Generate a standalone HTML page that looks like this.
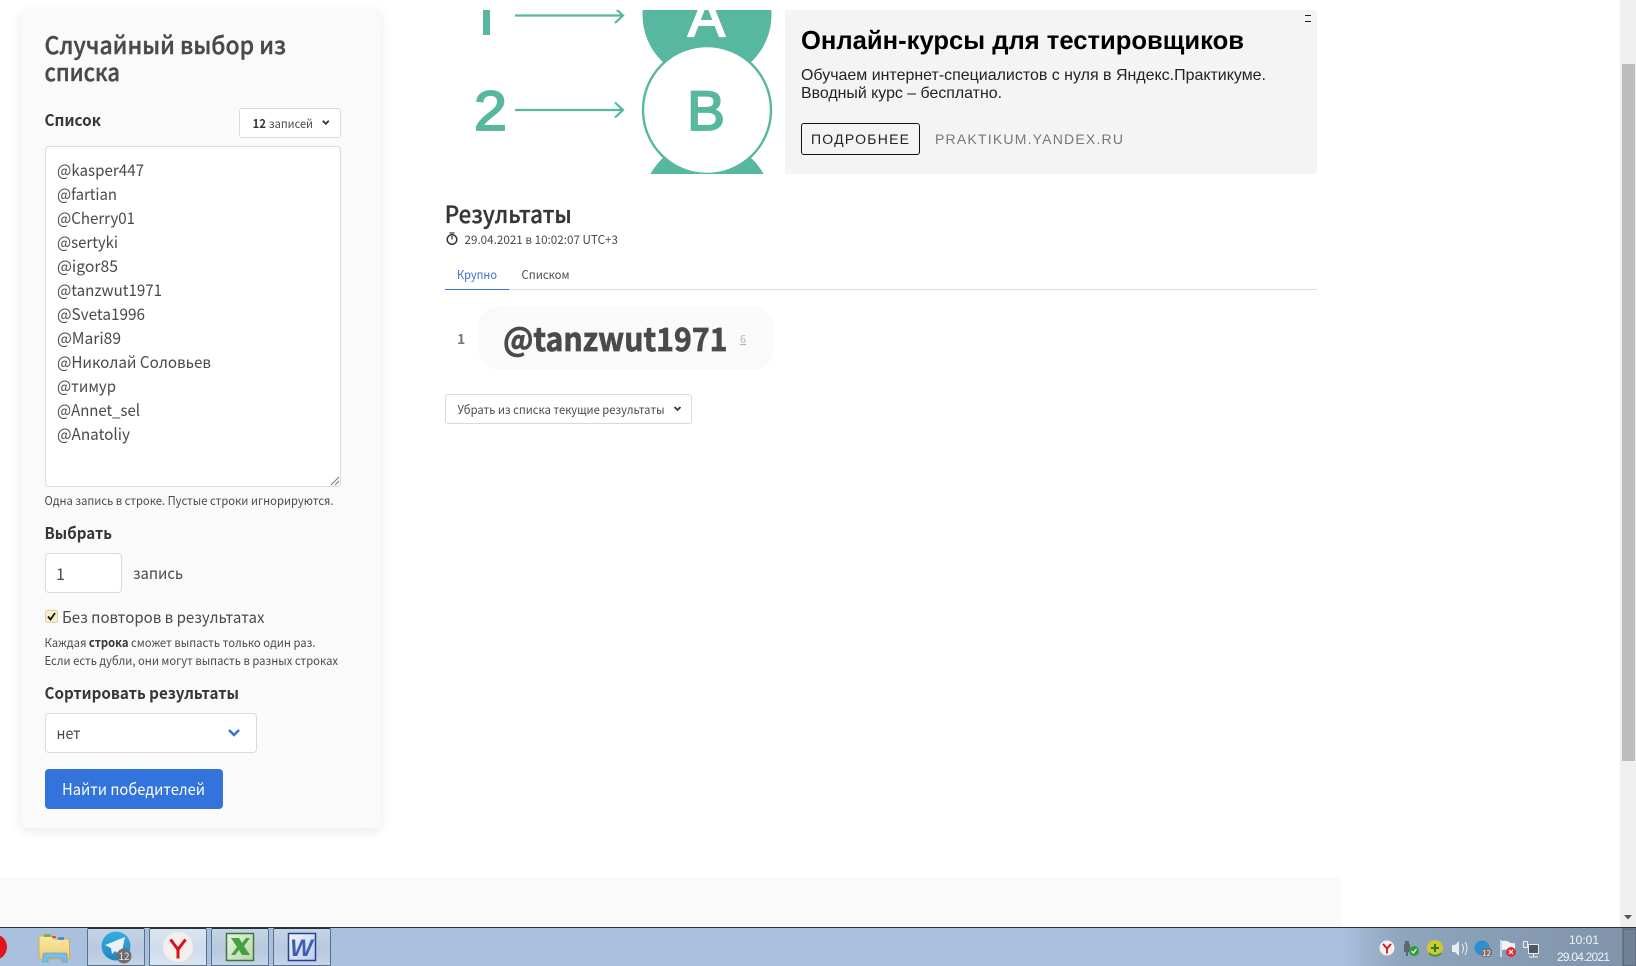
<!DOCTYPE html>
<html lang="ru"><head><meta charset="utf-8"><title>Случайный выбор из списка</title>
<style>
html,body{margin:0;padding:0;width:1636px;height:966px;overflow:hidden;background:#fff}
.b{position:absolute;box-sizing:border-box}
svg{position:absolute;left:0;top:0}
text{font-family:"Noto Sans CJK SC","Liberation Sans",sans-serif;fill:#4a4a4a}
.a{font-family:"Liberation Sans",Arial,sans-serif}
.bd{font-weight:700;fill:#363636}
.tb{position:absolute;top:928px;width:58px;height:38px;box-sizing:border-box;border:1px solid #5d7189;border-top-color:#27323f;border-radius:2px 2px 0 0;background:linear-gradient(180deg,#c6d4e6 0,#b7c9e0 55%,#c4d4e8 100%)}
</style></head><body>
<div class="b" style="left:21px;top:10px;width:360px;height:818px;background:#fafafa;border-radius:6px;box-shadow:0 3px 12px rgba(10,10,10,.09)"></div>
<div class="b" style="left:239px;top:108px;width:102px;height:30px;background:#fff;border:1px solid #dbdbdb;border-radius:3px"></div>
<div class="b" style="left:45px;top:146px;width:296px;height:341px;background:#fff;border:1px solid #dbdbdb;border-radius:4px"></div>
<div class="b" style="left:45px;top:553px;width:77px;height:40px;background:#fff;border:1px solid #dbdbdb;border-radius:4px"></div>
<div class="b" style="left:45px;top:713px;width:212px;height:40px;background:#fff;border:1px solid #dbdbdb;border-radius:4px"></div>
<div class="b" style="left:45px;top:769px;width:178px;height:40px;background:#3273dc;border-radius:4px"></div>
<div class="b" style="left:445px;top:394px;width:247px;height:30px;background:#fff;border:1px solid #dbdbdb;border-radius:3px"></div>
<div class="b" style="left:478px;top:306px;width:296px;height:64px;background:#fafafa;border-radius:22px"></div>
<div class="b" style="left:785px;top:10px;width:532px;height:164px;background:#f4f4f4"></div>
<div class="b" style="left:801px;top:123px;width:119px;height:32px;border:1px solid #111;border-radius:3px"></div>
<div class="b" style="left:445px;top:289px;width:872px;height:1px;background:#dbdbdb"></div>
<div class="b" style="left:445px;top:289px;width:64px;height:1px;background:#3273dc"></div>
<div class="b" style="left:0;top:877px;width:1341px;height:50px;background:#fafafa"></div>
<div class="b" style="left:1620px;top:0;width:16px;height:927px;background:#f0f0f0"></div>
<div class="b" style="left:1622px;top:64px;width:13px;height:697px;background:#bdbdbd"></div>
<div class="b" style="left:0;top:927px;width:1636px;height:39px;background:linear-gradient(90deg,#a9c1de 0,#a9c1de 1340px,#8ea5bd 1400px,#7f93a9 1636px);border-top:1px solid #27323f"></div>
<div class="tb" style="left:87px"></div>
<div class="tb" style="left:149px;background:linear-gradient(180deg,#dbe5f1 0,#cfdcec 55%,#d9e4f1 100%)"></div>
<div class="tb" style="left:211px"></div>
<div class="tb" style="left:273px"></div>
<svg width="1636" height="966" viewBox="0 0 1636 966" xmlns="http://www.w3.org/2000/svg">
<defs>
<clipPath id="ad"><rect x="445" y="10" width="340" height="164"/></clipPath>
<linearGradient id="xl" x1="0" y1="0" x2="1" y2="1"><stop offset="0" stop-color="#e6f2e0"/><stop offset="1" stop-color="#b7d8ad"/></linearGradient>
<linearGradient id="wd" x1="0" y1="0" x2="1" y2="1"><stop offset="0" stop-color="#f4f7fc"/><stop offset="1" stop-color="#bccdea"/></linearGradient>
<linearGradient id="fd" x1="0" y1="0" x2="0" y2="1"><stop offset="0" stop-color="#fbeaa8"/><stop offset="1" stop-color="#eccb72"/></linearGradient>
<linearGradient id="tg" x1="0" y1="0" x2="0" y2="1"><stop offset="0" stop-color="#37aee2"/><stop offset="1" stop-color="#1e85c2"/></linearGradient>
</defs>
<g clip-path="url(#ad)">
<circle cx="707" cy="15" r="64.500" fill="#57b79f"/>
<circle cx="707" cy="205" r="64.500" fill="#57b79f"/>
<circle cx="707" cy="110" r="64" fill="#fff" stroke="#57b79f" stroke-width="2.400"/>
<rect x="483" y="5" width="7" height="30" fill="#57b79f"/>
<path d="M515 15.500H622M615 8l8 7.500-8 7.500M515 110H622M615 102.500l8 7.500-8 7.500" fill="none" stroke="#57b79f" stroke-width="2.200"/>
<text x="474" y="130" class="a" font-size="56" textLength="33" lengthAdjust="spacingAndGlyphs" style="fill:#57b79f;stroke:#57b79f;stroke-width:1.800">2</text>
<text x="688" y="36" class="a" font-size="56" textLength="37" lengthAdjust="spacingAndGlyphs" style="fill:#fff;stroke:#fff;stroke-width:1.800">A</text>
<text x="687" y="130" class="a" font-size="56" textLength="38" lengthAdjust="spacingAndGlyphs" style="fill:#57b79f;stroke:#57b79f;stroke-width:1.800">B</text>
</g>
<g style="stroke:#4a4a4a;stroke-width:.4">
<text x="44.500" y="54" font-size="24" font-weight="500" textLength="241.500" lengthAdjust="spacingAndGlyphs">Случайный выбор из</text>
<text x="44.500" y="81" font-size="24" font-weight="500" textLength="75.500" lengthAdjust="spacingAndGlyphs">списка</text>
</g>
<text x="44.500" y="126" class="bd" font-size="16" textLength="56.500" lengthAdjust="spacingAndGlyphs">Список</text>
<text x="252.500" y="128" font-size="12" font-weight="700" textLength="13.500" lengthAdjust="spacingAndGlyphs" style="fill:#363636">12</text>
<text x="269" y="128" font-size="12" textLength="44" lengthAdjust="spacingAndGlyphs">записей</text>
<path d="M322.800 120.800l3 3 3-3" fill="none" stroke="#363636" stroke-width="1.800"/>
<g font-size="16">
<text x="57" y="176" textLength="87" lengthAdjust="spacingAndGlyphs">@kasper447</text>
<text x="57" y="200" textLength="60" lengthAdjust="spacingAndGlyphs">@fartian</text>
<text x="57" y="224" textLength="78" lengthAdjust="spacingAndGlyphs">@Cherry01</text>
<text x="57" y="248" textLength="61" lengthAdjust="spacingAndGlyphs">@sertyki</text>
<text x="57" y="272" textLength="61" lengthAdjust="spacingAndGlyphs">@igor85</text>
<text x="57" y="296" textLength="105" lengthAdjust="spacingAndGlyphs">@tanzwut1971</text>
<text x="57" y="320" textLength="88" lengthAdjust="spacingAndGlyphs">@Sveta1996</text>
<text x="57" y="344" textLength="64" lengthAdjust="spacingAndGlyphs">@Mari89</text>
<text x="57" y="368" textLength="154" lengthAdjust="spacingAndGlyphs">@Николай Соловьев</text>
<text x="57" y="392" textLength="59" lengthAdjust="spacingAndGlyphs">@тимур</text>
<text x="57" y="416" textLength="83" lengthAdjust="spacingAndGlyphs">@Annet_sel</text>
<text x="57" y="440" textLength="73" lengthAdjust="spacingAndGlyphs">@Anatoliy</text>
</g>
<path d="M331 485l8-8M335 485l4-4" stroke="#777" stroke-width="1"/>
<text x="44.500" y="505" font-size="12" textLength="289" lengthAdjust="spacingAndGlyphs">Одна запись в строке. Пустые строки игнорируются.</text>
<text x="44.500" y="539" class="bd" font-size="16" textLength="67.500" lengthAdjust="spacingAndGlyphs">Выбрать</text>
<text x="56" y="580" font-size="16">1</text>
<text x="133" y="579" font-size="16" textLength="50" lengthAdjust="spacingAndGlyphs">запись</text>
<rect x="45.500" y="610.500" width="12" height="12" rx="2" fill="#fbeec8" stroke="#d9cfae"/>
<path d="M48 616.500l2.500 3 4.500-6.500" fill="none" stroke="#111" stroke-width="1.800"/>
<text x="62" y="623" font-size="16" textLength="202.500" lengthAdjust="spacingAndGlyphs">Без повторов в результатах</text>
<text x="44.500" y="647" font-size="12" textLength="271" lengthAdjust="spacingAndGlyphs">Каждая <tspan font-weight="700" style="fill:#363636">строка</tspan> сможет выпасть только один раз.</text>
<text x="44.500" y="665" font-size="12" textLength="293.500" lengthAdjust="spacingAndGlyphs">Если есть дубли, они могут выпасть в разных строках</text>
<text x="44.500" y="699" class="bd" font-size="16" textLength="194.500" lengthAdjust="spacingAndGlyphs">Сортировать результаты</text>
<text x="56.500" y="739" font-size="16" textLength="24" lengthAdjust="spacingAndGlyphs">нет</text>
<path d="M229 730l5 5 5-5" fill="none" stroke="#3273dc" stroke-width="2.400"/>
<text x="62" y="795" font-size="16" textLength="143" lengthAdjust="spacingAndGlyphs" style="fill:#fff">Найти победителей</text>

<text x="801" y="49" class="a" font-size="26" font-weight="700" textLength="443" lengthAdjust="spacingAndGlyphs" style="fill:#000">Онлайн-курсы для тестировщиков</text>
<text x="801" y="80" class="a" font-size="16" textLength="465" lengthAdjust="spacingAndGlyphs" style="fill:#222">Обучаем интернет-специалистов с нуля в Яндекс.Практикуме.</text>
<text x="801" y="98" class="a" font-size="16" textLength="201" lengthAdjust="spacingAndGlyphs" style="fill:#222">Вводный курс – бесплатно.</text>
<text x="811" y="144" class="a" font-size="14" textLength="98" style="fill:#222">ПОДРОБНЕЕ</text>
<text x="935" y="144" class="a" font-size="14" textLength="188" style="fill:#777">PRAKTIKUM.YANDEX.RU</text>
<path d="M1305 15.500h6M1305 21.500h6" stroke="#222" stroke-width="1"/>

<text x="444.800" y="223" font-size="24" font-weight="500" textLength="127" lengthAdjust="spacingAndGlyphs" style="fill:#363636;stroke:#363636;stroke-width:.3">Результаты</text>
<circle cx="452" cy="239.500" r="4.800" fill="none" stroke="#363636" stroke-width="1.500"/>
<path d="M452 239.500v-3.500M449.500 233h5" stroke="#363636" stroke-width="1.300"/>
<text x="464.500" y="244" font-size="12" textLength="153.500" lengthAdjust="spacingAndGlyphs">29.04.2021 в 10:02:07 UTC+3</text>
<text x="457" y="279" font-size="12" textLength="40" lengthAdjust="spacingAndGlyphs" style="fill:#3d6fc4">Крупно</text>
<text x="521.500" y="279" font-size="12" textLength="48" lengthAdjust="spacingAndGlyphs">Списком</text>
<text x="457" y="344" font-size="14" font-weight="700" style="fill:#7a7a7a">1</text>
<text x="503" y="351" font-size="32" font-weight="700" textLength="224.500" lengthAdjust="spacingAndGlyphs" style="stroke:#4a4a4a;stroke-width:.7">@tanzwut1971</text>
<text x="740" y="343" font-size="11" text-decoration="underline" style="fill:#b5b5b5">6</text>
<text x="457.500" y="414" font-size="12" textLength="207" lengthAdjust="spacingAndGlyphs">Убрать из списка текущие результаты</text>
<path d="M674.500 407l3 3 3-3" fill="none" stroke="#363636" stroke-width="1.800"/>

<path d="M1624 915h8l-4 4.500z" fill="#555"/>

<!-- taskbar -->
<circle cx="-6" cy="947" r="13" fill="#e2131c"/>
<path d="M39 936h13l2 3h15l1 20H39z" fill="url(#fd)" stroke="#cfae5c"/>
<rect x="44" y="934" width="7" height="3" fill="#7fb04a"/><rect x="58" y="937" width="6" height="3" fill="#5a8fc0"/><rect x="52" y="936" width="4" height="2" fill="#d9534f"/>
<path d="M43 962v-7q0-2 2-2h20q2 0 2 2v7h-5v-4H48v4z" fill="#79bde6" stroke="#4e94c6" stroke-width=".6"/>
<circle cx="116" cy="946" r="14.500" fill="url(#tg)"/>
<path d="M105 945l20-8-4 19-6-5-3 3-1-6z" fill="#e8f2f8"/>
<circle cx="124" cy="956" r="7.500" fill="#6e6e6e"/>
<text x="124" y="960" text-anchor="middle" font-size="10" style="fill:#e6e6e6">12</text>
<circle cx="178" cy="947" r="15" fill="#f4efec"/>
<path d="M170.500 939.500l7.500 10 7.500-10M178 949.500v9" fill="none" stroke="#d8101c" stroke-width="3"/>
<rect x="226.500" y="933.500" width="27" height="27" fill="url(#xl)" stroke="#3a7a34" stroke-width="1.500"/>
<path d="M231 938h8l3 5 4-5h4l-6 8 6 9h-8l-3-5-4 5h-4l6-8z" fill="#46a03c"/>
<rect x="288.500" y="933.500" width="27" height="27" fill="url(#wd)" stroke="#23409a" stroke-width="1.500"/>
<text x="301.500" y="956" text-anchor="middle" class="a" font-size="24" font-weight="700" font-style="italic" style="fill:#3c5fb5">W</text>

<!-- tray -->
<circle cx="1387" cy="948" r="7.500" fill="#f5f1ee"/>
<path d="M1383 944l4 4.500 4-4.500M1387 948.500v5" fill="none" stroke="#d8101c" stroke-width="1.800"/>
<path d="M1405 941h4v3h1v8h-2v4h-2v-4h-2v-8h1z" fill="#5f666c"/><circle cx="1414" cy="951" r="5" fill="#2f9e3a"/>
<path d="M1411.500 951l2 2 3-4" fill="none" stroke="#fff" stroke-width="1.200"/>
<circle cx="1435" cy="948" r="8" fill="#cfc92e"/><path d="M1429 953a8 8 0 0 0 12 0" fill="none" stroke="#3f9a34" stroke-width="2"/><path d="M1435 944v8M1431 948h8" stroke="#2f7a2a" stroke-width="2"/>
<path d="M1452 945h3l4-4v15l-4-4h-3z" fill="#e8edf2"/><path d="M1462 944q3 4 0 9M1465 942q4 6 0 13" fill="none" stroke="#e8edf2"/>
<circle cx="1482" cy="948" r="7.500" fill="#2b8fd0"/><rect x="1481" y="948" width="11" height="9" rx="3" fill="#777"/>
<text x="1486.500" y="956" text-anchor="middle" font-size="8" style="fill:#eee">12</text>
<path d="M1501 940v17" stroke="#e8edf2" stroke-width="1.500"/><path d="M1502 941q4-1 7 1t6 1v8q-3 0-6-1t-7 0z" fill="#f2f4f6"/><circle cx="1511" cy="952" r="5" fill="#d8303a"/>
<path d="M1509 950l4 4M1513 950l-4 4" stroke="#fff" stroke-width="1.200"/>
<rect x="1528.500" y="944.500" width="10" height="9" fill="#4a5a60" stroke="#e8edf2"/><path d="M1523.500 941.500h4v6h-4zM1529 957h9M1533.500 954v3" fill="none" stroke="#e8edf2"/>
<text x="1584" y="944" text-anchor="middle" font-size="12" class="a" style="fill:#eef3f8">10:01</text>
<text x="1557" y="961" font-size="12" class="a" textLength="53" style="fill:#eef3f8">29.04.2021</text>
<rect x="1623" y="929" width="13" height="37" fill="#6f8296" stroke="#4c5c6c"/>
</svg>
</body></html>
